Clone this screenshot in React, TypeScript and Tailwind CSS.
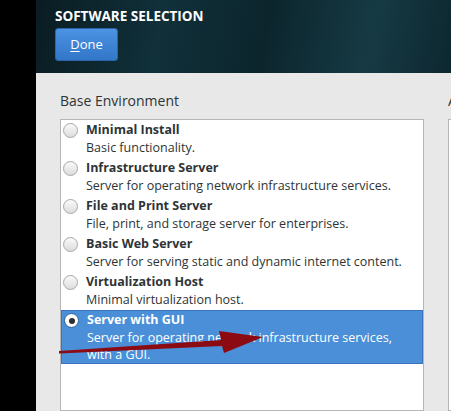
import React from 'react';

const environments = [
  { name: 'Minimal Install', desc: 'Basic functionality.' },
  { name: 'Infrastructure Server', desc: 'Server for operating network infrastructure services.' },
  { name: 'File and Print Server', desc: 'File, print, and storage server for enterprises.' },
  { name: 'Basic Web Server', desc: 'Server for serving static and dynamic internet content.' },
  { name: 'Virtualization Host', desc: 'Minimal virtualization host.' },
  { name: 'Server with GUI', desc: 'Server for operating network infrastructure services, with a GUI.' },
];

function Radio({ checked }: { checked: boolean }) {
  return (
    <span
      className={`mt-[2px] flex h-[15px] w-[15px] shrink-0 items-center justify-center rounded-full border ${
        checked ? 'border-[#2a5d9a] bg-white' : 'border-[#a8a8a8] bg-gradient-to-b from-[#fafafa] to-[#dcdcdc]'
      }`}
    >
      {checked && <span className="h-[6px] w-[6px] rounded-full bg-[#2e2e2e]" />}
    </span>
  );
}

export default function App() {
  const selected = 5;

  return (
    <div className="flex h-[411px] w-[451px] overflow-hidden bg-black font-['Open_Sans',sans-serif]">
      <div className="w-[36px] shrink-0 bg-black" />

      <div className="flex min-w-0 flex-1 flex-col">
        {/* Header */}
        <div className="h-[73px] shrink-0 bg-[linear-gradient(100deg,#0a1c22_0%,#10303a_30%,#0c252d_55%,#163a44_80%,#0d2730_100%)] px-[19px] pt-[6px]">
          <h1 className="text-[13.5px] font-bold leading-[20px] text-white">SOFTWARE SELECTION</h1>
          <button className="mt-[2px] h-[33px] w-[63px] rounded-[3px] border border-[#2c65ad] bg-gradient-to-b from-[#4c93e4] to-[#3276c8] text-[13px] text-white">
            <span className="underline underline-offset-2">D</span>one
          </button>
        </div>

        {/* Content */}
        <div className="flex flex-1 gap-[24px] overflow-hidden bg-[#e8e8e8] pl-[24px] pt-[19px]">
          <div className="flex w-[364px] shrink-0 flex-col">
            <div className="text-[14px] leading-[18px] text-[#2e3436]">Base Environment</div>
            <div className="relative mt-[9px] flex-1 border border-[#b6b6b6] bg-white">
              {environments.map((env, i) => {
                const isSel = i === selected;
                return (
                  <div
                    key={env.name}
                    className={`flex gap-[8px] px-[2px] ${
                      isSel ? 'border border-[#3a73b8] bg-[#4a8fd8] text-white' : 'py-[1px] text-[#2e3436]'
                    }`}
                  >
                    <Radio checked={isSel} />
                    <div className="flex flex-col">
                      <span className="text-[12.5px] font-bold leading-[18px]">{env.name}</span>
                      <span className={`text-[12.5px] ${isSel ? 'leading-[17px]' : 'leading-[18px]'}`}>{env.desc}</span>
                    </div>
                  </div>
                );
              })}

              {/* annotation arrow */}
              <svg className="absolute left-[-2px] top-[198px]" width="210" height="40" viewBox="0 0 210 40">
                <path d="M0 33 L162 22 L160 13 L204 19 L165 35 L163 28 L0 35.5 Z" fill="#8c0b12" />
              </svg>
            </div>
          </div>

          <div className="flex w-[120px] shrink-0 flex-col">
            <div className="whitespace-nowrap text-[14px] leading-[18px] text-[#2e3436]">Add-Ons for Selected Environment</div>
            <div className="mt-[9px] flex-1 border border-[#b6b6b6] bg-white" />
          </div>
        </div>
      </div>
    </div>
  );
}
